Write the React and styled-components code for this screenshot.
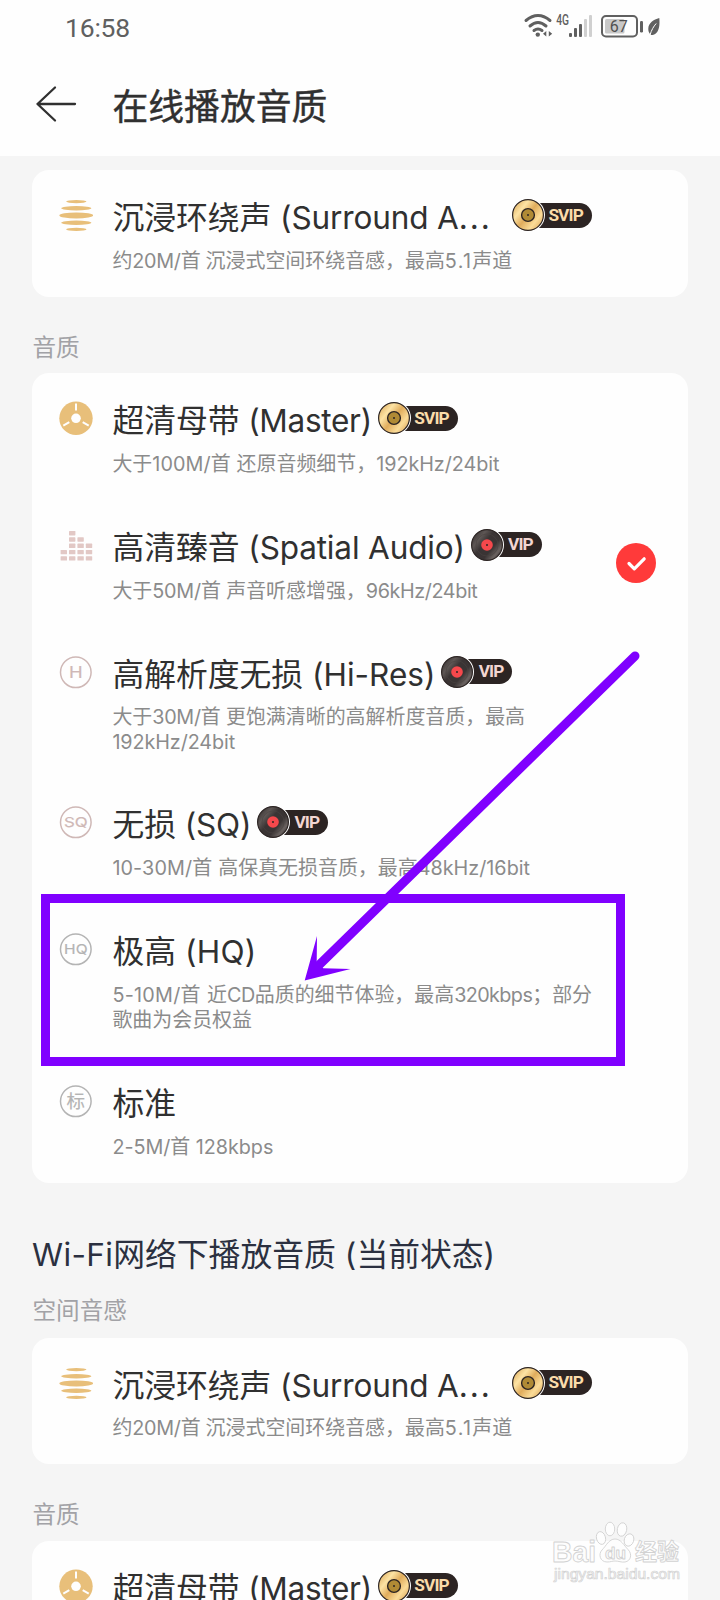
import React from "react";
import styled, { createGlobalStyle } from "styled-components";

const GlobalStyle = createGlobalStyle`
  * { box-sizing: border-box; }
  html, body { margin: 0; padding: 0; background: #f5f5f5; }
  body { overflow: hidden; font-family: "Inter", "Noto Sans CJK SC", sans-serif; }
`;

const Page = styled.div`
  position: relative;
  width: 720px;
  height: 1600px;
  overflow: hidden;
  background: #f5f5f5;
`;

const Header = styled.header`
  height: 156px;
  background: #fefefe;
`;

const StatusBar = styled.div`
  display: flex;
  justify-content: space-between;
  height: 56px;
  padding: 0 59px 0 65px;
`;

const Clock = styled.span`
  font: 400 26.5px/55px "Roboto", sans-serif;
  letter-spacing: -0.2px;
  color: #606060;
`;

const TitleBar = styled.div`
  display: flex;
  align-items: center;
  gap: 35.5px;
  height: 96px;
  padding-left: 35px;
`;

const PageTitle = styled.h1`
  margin: 0;
  font: 400 35.8px/50px "Noto Sans CJK SC", sans-serif;
  -webkit-text-stroke: 0.4px #303030;
  color: #303030;
`;

const Content = styled.main`
  padding: 14px 32px 0;
`;

const Card = styled.section`
  overflow: hidden;
  border-radius: 17px;
  background: #fefefe;
`;

const SectionLabel = styled.h3`
  margin: 0;
  height: ${(p) => p.$height}px;
  padding: ${(p) => p.$top}px 0 0 0.5px;
  font: 400 23.6px/34px "Noto Sans CJK SC", sans-serif;
  color: #a2a2a6;
`;

const NetworkHeading = styled.h2`
  margin: 0;
  height: 92px;
  padding-top: 52px;
  font-weight: 400;
  font-size: 31.8px;
  line-height: 40px;
  color: #2b3040;
  white-space: pre;
`;

const Row = styled.div`
  display: grid;
  grid-template-columns: 34px 1fr auto;
  column-gap: 19.2px;
  padding: 28px 32px 23px 27.2px;
`;

const IconCell = styled.div`
  height: 34px;
  display: flex;
  align-items: center;
`;

const Body = styled.div`
  min-width: 0;
  white-space: pre;
`;

const TitleLine = styled.div`
  display: flex;
  gap: ${(p) => p.$gap}px;
  height: 40px;
`;

const Name = styled.span`
  font-size: 31.8px;
  line-height: 40px;
  color: #303030;
`;

const Detail = styled.div`
  margin-top: 10.8px;
  font-size: 19.95px;
  line-height: 25px;
  color: #8b8b8b;
`;

const Line = styled.div`
  height: ${(p) => p.$height}px;
`;

const Latin = styled.span`
  font-family: "Inter", sans-serif;
  font-size: 0.992em;
  letter-spacing: ${(p) => p.$track}px;
`;

const Checked = styled.div`
  display: flex;
  align-self: center;
  height: 40px;
  margin-top: -5px;
`;

const BadgeBox = styled.span`
  display: flex;
  align-items: center;
  height: 34px;
`;

const Disc = styled.svg`
  position: relative;
  z-index: 1;
  flex: none;
`;

const Pill = styled.span`
  width: ${(p) => (p.$super ? 62 : 53)}px;
  height: 25px;
  margin-left: -15px;
  padding-right: 9px;
  border-radius: 0 12.5px 12.5px 0;
  background: #2c2423;
  color: ${(p) => (p.$super ? "#fbdcaa" : "#f3d6d2")};
  font: 700 17.3px/25.5px "Roboto", sans-serif;
  letter-spacing: -0.9px;
  text-align: right;
`;

const Frame = styled.div`
  position: absolute;
  left: 41px;
  top: 894px;
  width: 584px;
  height: 171.5px;
  border: 9px solid #8000ff;
`;

const Arrow = styled.svg`
  position: absolute;
  left: 0;
  top: 0;
  pointer-events: none;
`;

const Watermark = styled.div`
  position: absolute;
  left: 552px;
  top: 1520px;
  width: 140px;
  font-family: "Liberation Sans", "Noto Sans CJK SC", sans-serif;
`;

/* Wraps every non-CJK run so its tracking can be set apart from the Han glyphs.
   track is one number, or a list with a number for each run in turn. */
function Mixed({ text, track = 0 }) {
  let n = 0;
  return text
    .split(/([\u0020-\u007e]+)/)
    .filter(Boolean)
    .map((run, i) => {
      if (!/^[\u0020-\u007e]/.test(run)) return run;
      const t = Array.isArray(track) ? track[n++] : track;
      if (run.endsWith("...")) {
        return (
          <React.Fragment key={i}>
            <Latin $track={t}>{run.slice(0, -3)}</Latin>
            <Latin $track={2}>...</Latin>
          </React.Fragment>
        );
      }
      return <Latin key={i} $track={t}>{run}</Latin>;
    });
}

function Badge({ type }) {
  const gold = type === "SVIP";
  const id = "disc-" + type;
  return (
    <BadgeBox>
      <Disc width="33" height="34" viewBox="0 0 33 34">
        <defs>
          <linearGradient id={id} x1="0" y1="0.1" x2="1" y2="0.9">
            {gold ? (
              <>
                <stop offset="0" stopColor="#dba858" />
                <stop offset="0.28" stopColor="#fde3a4" />
                <stop offset="0.5" stopColor="#e0ac5c" />
                <stop offset="0.75" stopColor="#fbdc98" />
                <stop offset="1" stopColor="#dba355" />
              </>
            ) : (
              <>
                <stop offset="0" stopColor="#2f2a2a" />
                <stop offset="0.25" stopColor="#5e5755" />
                <stop offset="0.42" stopColor="#3a3434" />
                <stop offset="0.65" stopColor="#3a3434" />
                <stop offset="0.82" stopColor="#6a6260" />
                <stop offset="1" stopColor="#2f2a2a" />
              </>
            )}
          </linearGradient>
        </defs>
        <circle cx="16" cy="17" r="17" fill="#fefefe" />
        <circle cx="16" cy="17" r="15.4" fill={`url(#${id})`} stroke="#2c2423" strokeWidth="1.2" />
        {gold ? (
          <circle cx="16" cy="17" r="6.4" fill="#b08a35" stroke="#2c2423" strokeWidth="1.4" />
        ) : (
          <>
            <circle cx="16" cy="17" r="11" fill="none" stroke="#4a4342" strokeWidth="0.6" />
            <circle cx="16" cy="17" r="5.8" fill="#f5484c" />
          </>
        )}
        <circle cx="16" cy="17" r="1" fill="#2c2423" />
      </Disc>
      <Pill $super={gold}>{type}</Pill>
    </BadgeBox>
  );
}

const Svg34 = ({ children }) => (
  <svg width="34" height="34" viewBox="0 0 34 34">{children}</svg>
);

const SurroundIcon = () => (
  <Svg34>
    <g fill="#e8bf7a">
      <ellipse cx="17.3" cy="3.6" rx="10.2" ry="1.6" />
      <ellipse cx="17.3" cy="10.2" rx="15" ry="2.2" />
      <ellipse cx="17.3" cy="17.4" rx="17" ry="3" />
      <ellipse cx="17.3" cy="24.7" rx="15" ry="2.2" />
      <ellipse cx="17.3" cy="31.4" rx="10.2" ry="1.6" />
    </g>
  </Svg34>
);

const MasterIcon = () => (
  <Svg34>
    <circle cx="17" cy="17.3" r="16.7" fill="#e8bf7a" />
    <circle cx="17" cy="17.3" r="4.8" fill="#fefefe" />
    <g stroke="#fefefe" strokeWidth="2">
      {[0, 120, 240].map((a) => (
        <path key={a} d="M17 2.6V9.6" transform={`rotate(${a} 17 17.3)`} />
      ))}
    </g>
  </Svg34>
);

const SpatialIcon = () => (
  <Svg34>
    <g fill="#e2c8c5">
      {[2, 5, 4, 3].map((count, col) =>
        Array.from({ length: count }, (_, n) => (
          <rect key={`${col}-${n}`} x={1.6 + col * 8.4} y={28.2 - n * 6.3} width="6.4" height="4.4" rx="0.6" />
        ))
      )}
    </g>
  </Svg34>
);

const LetterIcon = ({ label, color, size = 13.5, stretch = 1.25, dy = 22.2 }) => (
  <Svg34>
    <circle cx="16.8" cy="17.3" r="15.3" fill="none" stroke={color} strokeWidth="1.5" />
    <text
      transform={`translate(16.8 ${dy}) scale(${stretch} 1)`}
      textAnchor="middle"
      fontFamily='"Inter", "Noto Sans CJK SC", sans-serif'
      fontSize={size}
      fontWeight="400"
      fill={color}
      stroke={color}
      strokeWidth="0.2"
    >
      {label}
    </text>
  </Svg34>
);

const rose = "#cfb8b6";
const grey = "#b4b4b4";

const surround = {
  icon: <SurroundIcon />, name: "沉浸环绕声 (Surround A...", track: -0.15, gap: 20, badge: "SVIP",
  detail: [{ text: "约20M/首 沉浸式空间环绕音感，最高5.1声道", track: [-0.3, -0.6, 1.3] }],
};
const master = {
  icon: <MasterIcon />, name: "超清母带 (Master)", track: -0.3, badge: "SVIP",
  detail: [{ text: "大于100M/首 还原音频细节，192kHz/24bit", track: [0.1, 0.3, -0.05] }],
};
const qualities = [
  master,
  {
    icon: <SpatialIcon />, name: "高清臻音 (Spatial Audio)", track: -0.16, badge: "VIP", checked: true,
    detail: [{ text: "大于50M/首 声音听感增强，96kHz/24bit", track: [-0.2, -0.3, -0.4] }],
  },
  {
    icon: <LetterIcon label="H" color={rose} size={16} stretch={1.15} dy={23.1} />,
    name: "高解析度无损 (Hi-Res)", badge: "VIP",
    detail: [
      { text: "大于30M/首 更饱满清晰的高解析度音质，最高", track: -0.3 },
      { text: "192kHz/24bit", track: -0.1, height: 23.7 },
    ],
  },
  {
    icon: <LetterIcon label="SQ" color={rose} />, name: "无损 (SQ)", track: -0.2, badge: "VIP",
    detail: [{ text: "10-30M/首 高保真无损音质，最高48kHz/16bit", track: [0.1, 0.6, 0] }],
  },
  {
    icon: <LetterIcon label="HQ" color={grey} stretch={1.15} />, name: "极高 (HQ)", track: 0.2,
    detail: [
      { text: "5-10M/首 近CD品质的细节体验，最高320kbps；部分", track: [0.25, 1, -0.5, -0.6] },
      { text: "歌曲为会员权益", height: 25.3 },
    ],
  },
  {
    icon: <LetterIcon label="标" color={grey} size={18.5} stretch={1} dy={24} />, name: "标准",
    detail: [{ text: "2-5M/首 128kbps", track: -0.05 }],
  },
];

function Quality({ item }) {
  return (
    <Row>
      <IconCell>{item.icon}</IconCell>
      <Body>
        <TitleLine $gap={item.gap || 6}>
          <Name><Mixed text={item.name} track={item.track} /></Name>
          {item.badge && <Badge type={item.badge} />}
        </TitleLine>
        <Detail>
          {item.detail.map((line) => (
            <Line key={line.text} $height={line.height || 25}>
              <Mixed text={line.text} track={line.track} />
            </Line>
          ))}
        </Detail>
      </Body>
      {item.checked && (
        <Checked>
          <svg width="40" height="40" viewBox="0 0 40 40">
            <circle cx="20" cy="20" r="20" fill="#ff3a3a" />
            <path d="M13 20.5L18.3 25.8L28.2 15.8" fill="none" stroke="#fff" strokeWidth="3.2" strokeLinecap="round" strokeLinejoin="round" />
          </svg>
        </Checked>
      )}
    </Row>
  );
}

const StatusIcons = () => (
  <svg width="138" height="56" viewBox="0 0 138 56" fill="none">
    <g stroke="#606060" strokeWidth="3" strokeLinecap="round">
      <path d="M3 20.5Q15 10.5 27 20.5" />
      <path d="M7 26Q15 19 23 26" />
      <path d="M11 30.5Q15 27.5 19 30.5" />
    </g>
    <circle cx="14.8" cy="34.6" r="2.2" fill="#606060" />
    <path d="M23.3 31V36.4L20 33.8ZM25.8 31V36.4L29.2 33.8Z" fill="#606060" />
    <text x="33.2" y="24.8" fontFamily="Roboto, sans-serif" fontSize="14" fontWeight="500" fill="#606060" textLength="12.8" lengthAdjust="spacingAndGlyphs">4G</text>
    <g fill="#606060">
      <rect x="46" y="33" width="3" height="4" rx="1" />
      <rect x="51" y="28" width="3" height="9" rx="1" />
      <rect x="56" y="24" width="3" height="13" rx="1" />
    </g>
    <g fill="#d0d0d0">
      <rect x="61" y="19" width="3" height="18" rx="1" />
      <rect x="66" y="15" width="3" height="22" rx="1" />
    </g>
    <rect x="79" y="16" width="35" height="20.5" rx="4" stroke="#606060" strokeWidth="2" />
    <rect x="82" y="19" width="19.5" height="14.5" rx="1.5" fill="#c8c8c8" />
    <text x="95.8" y="32.3" textAnchor="middle" fontFamily="Roboto, sans-serif" fontSize="16" fontWeight="400" fill="#505050">67</text>
    <rect x="117" y="21" width="3" height="11.5" rx="1.2" fill="#606060" />
    <path d="M136.3 18C130.5 19.5 125.5 23 125.3 28.5C125.2 30.5 125.7 32 126.5 33.2L128 35C130 35 132.5 34.5 134.2 32C136.8 28 136.7 22.5 136.3 18Z" fill="#606060" />
    <path d="M127 35C128.5 30 130.5 26.5 133.2 23.5" stroke="#fefefe" strokeWidth="1" />
  </svg>
);

const BaiduMark = () => (
  <svg width="136" height="72" viewBox="0 0 136 72">
    <g fill="#fdfdfd" stroke="#d2d2d2" strokeWidth="0.9" strokeLinejoin="round">
      <ellipse cx="49" cy="18" rx="4.5" ry="6.5" transform="rotate(-15 49 18)" />
      <ellipse cx="58" cy="9" rx="4.7" ry="6.8" />
      <ellipse cx="70" cy="9.5" rx="4.7" ry="6.8" transform="rotate(12 70 9.5)" />
      <ellipse cx="77" cy="20" rx="4.7" ry="6.3" transform="rotate(18 77 20)" />
      <path d="M63 19C57 19 54 26 50 30C46 34 48 42 55 42C59 42 60 41 63 41C67 41 69 42.5 73 42C79 41 80.5 34 76 29.5C72 25.5 69 19 63 19Z" />
      <text x="0" y="42" fontSize="30" fontWeight="700" textLength="44" lengthAdjust="spacingAndGlyphs">Bai</text>
      <text x="53" y="39" fontSize="17" fontWeight="700" textLength="21" lengthAdjust="spacingAndGlyphs">du</text>
      <text x="83" y="40" fontSize="22.5" fontWeight="700" textLength="44" lengthAdjust="spacingAndGlyphs">经验</text>
      <text x="2" y="59" fontSize="15" textLength="126" lengthAdjust="spacingAndGlyphs" strokeWidth="0.7">jingyan.baidu.com</text>
    </g>
  </svg>
);

export default function App() {
  return (
    <Page lang="zh-CN">
      <GlobalStyle />
      <Header>
        <StatusBar>
          <Clock>16:58</Clock>
          <StatusIcons />
        </StatusBar>
        <TitleBar>
          <svg width="42" height="38" viewBox="0 0 42 38" fill="none" stroke="#303030" strokeWidth="2.3" strokeLinecap="round" strokeLinejoin="round">
            <path d="M20 2.5L2.5 19L20 35.5M2.5 19H40" />
          </svg>
          <PageTitle>在线播放音质</PageTitle>
        </TitleBar>
      </Header>
      <Content>
        <Card><Quality item={surround} /></Card>
        <SectionLabel $height={76.3} $top={31.8}>音质</SectionLabel>
        <Card>
          {qualities.map((q) => <Quality key={q.name} item={q} />)}
        </Card>
        <NetworkHeading><Mixed text="Wi-Fi网络下播放音质 (当前状态)" track={[0.35, 0.1, 0]} /></NetworkHeading>
        <SectionLabel $height={62.7} $top={17.5}>空间音感</SectionLabel>
        <Card><Quality item={surround} /></Card>
        <SectionLabel $height={76.3} $top={31.8}>音质</SectionLabel>
        <Card><Quality item={master} /></Card>
      </Content>
      <Frame />
      <Arrow width="720" height="1600" viewBox="0 0 720 1600">
        <path d="M635 656L317 967" stroke="#8000ff" strokeWidth="9" strokeLinecap="round" />
        <path d="M304.7 980.5L317 936L316.7 962.3L323.3 968.3L350.5 969Z" fill="#8000ff" />
      </Arrow>
      <Watermark><BaiduMark /></Watermark>
    </Page>
  );
}
